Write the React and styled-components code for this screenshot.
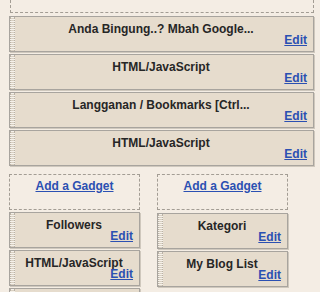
import React from 'react'
import styled, { createGlobalStyle } from 'styled-components'

const Global = createGlobalStyle`
  html, body {
    margin: 0;
    padding: 0;
    background: #f4ede4;
  }
  body {
    font-family: "Liberation Sans", Arial, sans-serif;
    width: 320px;
    height: 292px;
    overflow: hidden;
  }
`

const Page = styled.div`
  padding: 0 6px 0 9px;
  display: flex;
  flex-direction: column;
`

const DropZone = styled.div`
  box-sizing: border-box;
  height: ${p => p.h || 36}px;
  border: 1px dashed #a39d94;
  ${p => p.open && 'border-top: none;'}
  margin-left: ${p => p.inset || 0}px;
  text-align: center;
  padding-top: 1px;
`

const Widget = styled.div`
  box-sizing: border-box;
  height: 36px;
  margin-top: ${p => p.gap}px;
  display: flex;
  background: #e6dccd;
  border: 1px solid #a8a49e;
  box-shadow: 1px 1px 0 #cfc8bd;
`

const Grip = styled.div`
  width: 3px;
  flex: none;
  border-left: 1px dotted #b9b1a5;
  border-right: 1px dotted #b9b1a5;
  background: repeating-linear-gradient(to bottom, #f5f1ea 0 1px, #d9d0c2 1px 2px);
`

const Body = styled.div`
  flex: 1;
  display: flex;
  flex-direction: column;
  padding: 6px 6px 0 0;
`

const Title = styled.div`
  font-weight: bold;
  font-size: 12px;
  line-height: 12px;
  color: #262626;
  text-align: center;
  white-space: nowrap;
`

const Edit = styled.a`
  align-self: flex-end;
  font-weight: bold;
  font-size: 12px;
  line-height: 12px;
  margin-top: -1px;
  color: #2b50b2;
  text-decoration: underline;
`

const AddLink = styled.a`
  font-weight: bold;
  font-size: 12px;
  color: #2b50b2;
  text-decoration: underline;
`

const Columns = styled.div`
  display: flex;
  gap: 17px;
  margin-top: 8px;
`

const Column = styled.div`
  width: 131px;
  display: flex;
  flex-direction: column;
`

const Gadget = ({ title, gap = 2 }) => (
  <Widget gap={gap}>
    <Grip />
    {title && (
      <Body>
        <Title>{title}</Title>
        <Edit href="#">Edit</Edit>
      </Body>
    )}
  </Widget>
)

export default function App() {
  return (
    <>
      <Global />
      <Page>
        <DropZone open h={13} inset={1} />
        <Gadget title="Anda Bingung..? Mbah Google..." gap={3} />
        <Gadget title="HTML/JavaScript" />
        <Gadget title="Langganan / Bookmarks [Ctrl..." />
        <Gadget title="HTML/JavaScript" />
        <Columns>
          <Column>
            <DropZone>
              <AddLink href="#">Add a Gadget</AddLink>
            </DropZone>
            <Gadget title="Followers" />
            <Gadget title="HTML/JavaScript" />
            <Gadget />
          </Column>
          <Column>
            <DropZone>
              <AddLink href="#">Add a Gadget</AddLink>
            </DropZone>
            <Gadget title="Kategori" gap={3} />
            <Gadget title="My Blog List" />
          </Column>
        </Columns>
      </Page>
    </>
  )
}
